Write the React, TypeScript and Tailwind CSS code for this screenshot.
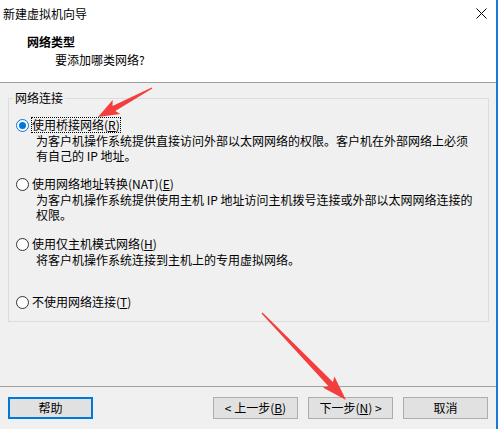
import React from "react";

const Radio = ({ checked }: { checked?: boolean }) =>
  checked ? (
    <span className="w-[13px] h-[13px] rounded-full border border-[#0078d7] bg-white flex items-center justify-center shrink-0">
      <span className="w-[7px] h-[7px] rounded-full bg-[#0078d7]" />
    </span>
  ) : (
    <span className="w-[13px] h-[13px] rounded-full border border-[#333333] bg-white shrink-0" />
  );

const Option = ({
  checked,
  label,
  mn,
  extra,
  lines,
  className,
}: {
  checked?: boolean;
  label: string;
  mn: string;
  extra?: string;
  lines: string[];
  className?: string;
}) => (
  <div className={className}>
    <div className="flex items-center h-[16px]">
      <Radio checked={checked} />
      <span
        className={`ml-[2px] leading-[14px] border border-dotted ${
          checked ? "border-black" : "border-transparent"
        }`}
      >
        {label}
        {extra}(<span className="underline underline-offset-[1px]">{mn}</span>)
      </span>
    </div>
    <div className="pl-[20px] leading-[15px]">
      {lines.map((l, i) => (
        <div key={i} className="whitespace-nowrap">
          {l}
        </div>
      ))}
    </div>
  </div>
);

const Btn = ({
  children,
  primary,
}: {
  children: React.ReactNode;
  primary?: boolean;
}) => (
  <div
    className={`w-[85px] h-[22px] flex items-center justify-center bg-[#e1e1e1] ${
      primary ? "border-2 border-[#0078d7]" : "border border-[#adadad]"
    }`}
  >
    {children}
  </div>
);

export default function App() {
  return (
    <div className="relative w-[500px] h-[429px] bg-white overflow-hidden font-['Noto_Sans_CJK_SC',sans-serif] text-[12px] text-black">
      <div className="w-[498px] h-[429px] border-r-2 border-[#1f78d4] flex flex-col">
        {/* Top white header */}
        <div className="h-[82px] bg-white">
          <div className="h-[27px] flex items-center justify-between pl-[3px] pr-[9px]">
            <span className="leading-[15px]">新建虚拟机向导</span>
            <svg width="11" height="11" viewBox="0 0 11 11">
              <path d="M0.5 0.5 L10.5 10.5 M10.5 0.5 L0.5 10.5" stroke="#000" strokeWidth="1" />
            </svg>
          </div>
          <div className="mt-[7px] pl-[27px] leading-[15px] font-bold">网络类型</div>
          <div className="mt-[3px] pl-[55px] leading-[15px]">要添加哪类网络?</div>
        </div>
        <div className="h-px bg-[#a0a0a0]" />
        {/* Body */}
        <div className="h-[303px] bg-[#f0f0f0] pt-[8px]">
          <fieldset className="ml-[8px] w-[481px] border border-[#dcdcdc] p-0 m-0">
            <legend className="ml-[4px] px-[2px] leading-[14px]">网络连接</legend>
            <div className="pl-[7px] pt-[12px] pb-[11px]">
              <Option
                checked
                label="使用桥接网络"
                mn="R"
                lines={[
                  "为客户机操作系统提供直接访问外部以太网网络的权限。客户机在外部网络上必须",
                  "有自己的 IP 地址。",
                ]}
              />
              <Option
                className="mt-[13px]"
                label="使用网络地址转换"
                extra="(NAT)"
                mn="E"
                lines={[
                  "为客户机操作系统提供使用主机 IP 地址访问主机拨号连接或外部以太网网络连接的",
                  "权限。",
                ]}
              />
              <Option
                className="mt-[14px]"
                label="使用仅主机模式网络"
                mn="H"
                lines={["将客户机操作系统连接到主机上的专用虚拟网络。"]}
              />
              <Option className="mt-[27px]" label="不使用网络连接" mn="T" lines={[]} />
            </div>
          </fieldset>
        </div>
        <div className="h-px bg-[#a0a0a0]" />
        {/* Buttons */}
        <div className="flex-1 bg-[#f0f0f0] pt-[10px] px-[8px] flex justify-between">
          <Btn primary>帮助</Btn>
          <div className="flex gap-[10px]">
            <Btn>
              &lt; 上一步(<span className="underline underline-offset-[1px]">B</span>)
            </Btn>
            <Btn>
              下一步(<span className="underline underline-offset-[1px]">N</span>) &gt;
            </Btn>
            <Btn>取消</Btn>
          </div>
        </div>
      </div>
      {/* Red annotation arrows */}
      <svg
        className="absolute inset-0 pointer-events-none"
        width="500"
        height="429"
        viewBox="0 0 500 429"
      >
        <polygon
          points="152.3,88.6 115.3,111.1 120.3,114.1 98,117 112.7,100 112.5,105.9 151.7,87.4"
          fill="#f43d3d"
        />
        <polygon
          points="261.5,313.5 328.5,386.3 322.8,387.6 346,400 334.4,376.4 332.9,382.1 262.5,312.5"
          fill="#f43d3d"
        />
      </svg>
    </div>
  );
}
